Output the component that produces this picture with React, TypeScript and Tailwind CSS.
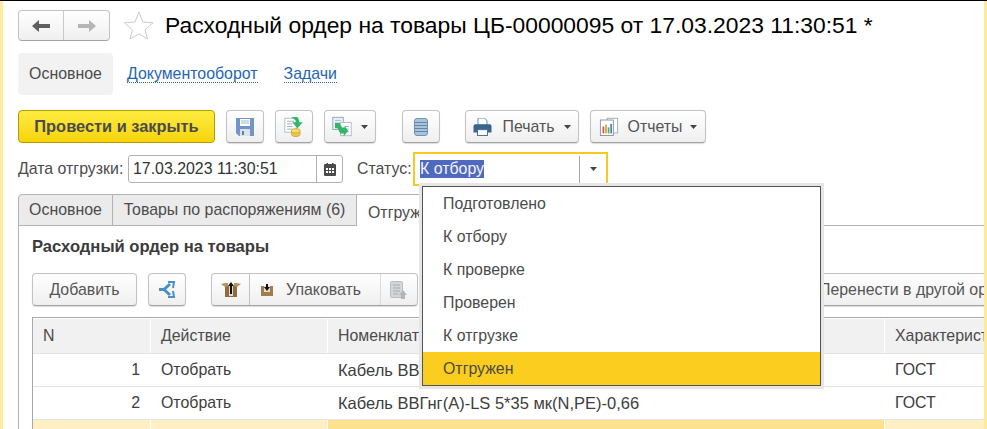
import React from "react";

const btn =
  "flex shrink-0 items-center justify-center h-[33px] rounded-[4px] border border-[#c2c2c2] border-b-[#a3a3a3] bg-linear-to-b from-white to-[#efefef] text-[#555555] shadow-[0_1px_1px_#dcdcdc]";

const Caret = ({ className = "" }: { className?: string }) => (
  <svg width="7" height="4" viewBox="0 0 7 4" className={className}>
    <path d="M0 0h7L3.500 4z" fill="#444" />
  </svg>
);

const Floppy = () => (
  <svg width="18" height="18" viewBox="0 0 18 18">
    <path d="M0 0h18v18H3l-3-3z" fill="#6f96c6" />
    <rect x="4" y="1" width="10" height="7" fill="#fff" />
    <path d="M5 3h8M5 5h8" stroke="#9ab4d4" />
    <rect x="4" y="11" width="10" height="7" fill="#dbe4ee" />
    <rect x="6" y="13" width="2" height="4" fill="#5f84b2" />
  </svg>
);

const PostIcon = () => (
  <svg width="20" height="21" viewBox="0 0 22 24">
    <rect x="0.500" y="2.500" width="13" height="16" fill="#fff" stroke="#a9b8c8" />
    <path d="M3 6h8M3 9h6M3 12h6M3 15h6" stroke="#93a8bd" />
    <ellipse cx="13" cy="20" rx="5" ry="3.500" fill="#ecc94b" stroke="#c9a227" />
    <ellipse cx="13" cy="17" rx="5" ry="2.500" fill="#f6dc72" stroke="#c9a227" />
    <path d="M8 1h7l2 4v2h4l-6 7-6-7h4V5z" fill="#33b56a" />
  </svg>
);

const MoveIcon = () => (
  <svg width="20" height="21" viewBox="0 0 22 24">
    <rect x="0.500" y="1.500" width="12" height="14" fill="#eef2f6" stroke="#8ea1b5" />
    <path d="M3 5h7M3 8h7" stroke="#a0b0c0" />
    <rect x="9.500" y="7.500" width="12" height="15" fill="#fff" stroke="#a9b8c8" />
    <path d="M14 12h5M14 15h5M15 18h4" stroke="#a0b0c0" />
    <path d="M3 8h5l3 5h3v-2l4 6-5 6v-3h-4l-3-6H3z" fill="#33b56a" />
  </svg>
);

const Stack = () => (
  <svg width="14" height="18" viewBox="0 0 14 18">
    <rect x="0.500" y="0.500" width="13" height="17" rx="2.500" fill="#a9c3db" stroke="#6e93b5" />
    <path d="M1 4.500h12M1 7.500h12M1 10.500h12M1 13.500h12" stroke="#5f87ac" strokeWidth="1.200" />
  </svg>
);

const Printer = () => (
  <svg width="19" height="18" viewBox="0 0 20 20">
    <path d="M5 0h7l3 3v5H5z" fill="#fff" stroke="#5d7f9f" />
    <path d="M2 7h16a2 2 0 0 1 2 2v7h-4v-3H4v3H0V9a2 2 0 0 1 2-2z" fill="#3a648e" />
    <rect x="4.500" y="13" width="11" height="6.500" fill="#fff" stroke="#3a648e" />
  </svg>
);

const Reports = () => (
  <svg width="20" height="19" viewBox="0 0 21 22">
    <rect x="8.500" y="1.500" width="12" height="17" fill="#fff" stroke="#9aa7b3" />
    <rect x="0.500" y="3.500" width="15" height="18" fill="#fff" stroke="#7e8d9b" />
    <rect x="3" y="11" width="2" height="8" fill="#d9534f" />
    <rect x="6" y="9" width="2" height="10" fill="#e0a030" />
    <rect x="9" y="12" width="2" height="7" fill="#4caf6a" />
    <rect x="12" y="8" width="2" height="11" fill="#4f80b8" />
  </svg>
);

const Share = () => (
  <svg width="18" height="17" viewBox="0 0 18 17" fill="none">
    <path d="M1 8.500h5L12 3" stroke="#4a8fc7" strokeWidth="3" />
    <path d="M6 8.500L12 14" stroke="#4a8fc7" strokeWidth="3" />
    <path d="M10 1l6 0-1 6M10 16l6 0-1-6" stroke="#4a8fc7" strokeWidth="2" />
  </svg>
);

const Unbox = () => (
  <svg width="20" height="15" viewBox="0 0 20 15">
    <path d="M4 4h12v11H4z" fill="#8f6c40" />
    <path d="M4 5L0 2l4-1h3v3zM16 5l4-3-4-1h-3v3z" fill="#b8925f" />
    <rect x="8" y="4" width="4" height="10" fill="#e8dcc8" />
    <path d="M10 0l3 4h-2v8H9V4H7z" fill="#111" />
  </svg>
);

const Pack = () => (
  <svg width="12" height="12" viewBox="0 0 12 12">
    <rect x="0" y="2" width="12" height="10" fill="#a07c50" />
    <rect x="3" y="2" width="6" height="6" fill="#e8dcc8" />
    <path d="M5 0h2v3h2L6 7 3 3h2z" fill="#111" />
  </svg>
);

const DocUp = () => (
  <svg width="18" height="18" viewBox="0 0 18 18">
    <rect x="0.500" y="0.500" width="12" height="16" rx="1" fill="#d3d6d8" stroke="#b9bdc0" />
    <path d="M3 4h7M3 7h7M3 10h7M3 13h5" stroke="#a9adb0" />
    <path d="M13 9l4 5h-2v4h-4v-4H9z" fill="#b3b6b8" />
  </svg>
);

const Calendar = () => (
  <svg width="12" height="13" viewBox="0 0 12 13">
    <path d="M1 1h10a1 1 0 0 1 1 1v10a1 1 0 0 1-1 1H1a1 1 0 0 1-1-1V2a1 1 0 0 1 1-1z" fill="#4a4a4a" />
    <rect x="2.500" y="0" width="1.500" height="2.500" fill="#4a4a4a" />
    <rect x="8" y="0" width="1.500" height="2.500" fill="#4a4a4a" />
    <path d="M2 5h2v2H2zM5 5h2v2H5zM8 5h2v2H8zM2 8h2v2H2zM5 8h2v2H5zM8 8h2v2H8z" fill="#fff" />
  </svg>
);

const Nav = ({ dir, color }: { dir: "l" | "r"; color: string }) => (
  <svg width="18" height="14" viewBox="0 0 18 14">
    {dir === "l" ? (
      <path d="M0 7l7-6v4h11v4H7v4z" fill={color} />
    ) : (
      <path d="M18 7l-7-6v4H0v4h11v4z" fill={color} />
    )}
  </svg>
);

const rows = [
  ["1", "Отобрать", "Кабель ВВГнг(А)-LS 5*35 мк(N,PE)-0,66", "ГОСТ"],
  ["2", "Отобрать", "Кабель ВВГнг(А)-LS 5*35 мк(N,PE)-0,66", "ГОСТ"],
];

const items = ["Подготовлено", "К отбору", "К проверке", "Проверен", "К отгрузке", "Отгружен"];

export default function App() {
  return (
    <div className="relative flex h-[429px] w-[987px] flex-col overflow-hidden bg-white font-['Liberation_Sans',Arial,sans-serif] text-[15.900px] text-[#4b4b4b]">
      <div className="h-px bg-black" />
      <div className="flex min-h-0 flex-1">
        <div className="w-[3px] bg-[#fdeb9c]" />
        <div className="flex min-w-0 flex-1 flex-col overflow-hidden pl-[15px]">
          <div className="mt-[9px] flex h-[31px] items-center">
            <div className="flex h-[31px] w-[92px] rounded-[4px] border border-[#c2c2c2] border-b-[#a3a3a3] bg-linear-to-b from-white to-[#efefef]">
              <div className="flex w-[45px] items-center justify-center border-r border-[#c9c9c9]">
                <Nav dir="l" color="#5f5f5f" />
              </div>
              <div className="flex flex-1 items-center justify-center">
                <Nav dir="r" color="#b5b5b5" />
              </div>
            </div>
            <svg width="30" height="29" viewBox="0 0 30 29" className="ml-[14px]">
              <path d="M15 1l4 10 10 .8-8 7 2.500 9.200L15 23 6 28l2.500-9.200-8-7L11 11z" fill="#fff" stroke="#c8ccd0" />
            </svg>
            <div className="ml-[11px] whitespace-nowrap text-[22.850px] leading-none text-black">
              Расходный ордер на товары ЦБ-00000095 от 17.03.2023 11:30:51 *
            </div>
          </div>

          <div className="mt-[12px] flex h-[42px] items-center">
            <div className="flex h-[42px] w-[95px] items-center justify-center rounded-[4px] bg-[#f2f2f2]">Основное</div>
            <a className="ml-[14px] border-b border-dotted border-[#2a6bb8] leading-[17px] text-[#1f66b5]">Документооборот</a>
            <a className="ml-[26px] border-b border-dotted border-[#2a6bb8] leading-[17px] text-[#1f66b5]">Задачи</a>
          </div>

          <div className="mt-[15px] flex h-[33px] items-center">
            <div className="flex h-[33px] w-[197px] items-center justify-center rounded-[4px] border border-[#b39b00] bg-linear-to-b from-[#ffec3d] to-[#f5d400] text-[16.400px] font-bold text-[#4b4b4b]">
              Провести и закрыть
            </div>
            <div className={btn + " ml-[11px] w-[38px]"}><Floppy /></div>
            <div className={btn + " ml-[11px] w-[38px]"}><PostIcon /></div>
            <div className={btn + " ml-[11px] w-[52px] gap-[9px]"}><MoveIcon /><Caret /></div>
            <div className={btn + " ml-[26px] w-[38px]"}><Stack /></div>
            <div className={btn + " ml-[25px] w-[114px]"}>
              <Printer /><span className="ml-[10px]">Печать</span><Caret className="ml-[9px]" />
            </div>
            <div className={btn + " ml-[11px] w-[116px]"}>
              <Reports /><span className="ml-[9px]">Отчеты</span><Caret className="ml-[8px]" />
            </div>
          </div>

          <div className="mt-[9px] flex h-[34px] items-center">
            <span className="w-[110px] whitespace-nowrap">Дата отгрузки:</span>
            <div className="flex h-[28px] w-[215px] items-center rounded-[3px] border border-[#b0b0b0] text-[#333]">
              <span className="flex-1 pl-[4px]">17.03.2023 11:30:51</span>
              <div className="flex h-full w-[26px] items-center justify-center border-l border-[#b0b0b0]"><Calendar /></div>
            </div>
            <span className="ml-[14px] w-[56px] whitespace-nowrap">Статус:</span>
            <div className="flex h-[34px] w-[195px] items-center border-2 border-[#fac81e] pl-[5px]">
              <span className="bg-[#4f69c0] leading-[18px] text-[#f4f4f4]">К отбору</span>
              <div className="ml-auto flex h-[27px] w-[27px] items-center justify-center border-l border-[#a8a8a8]"><Caret /></div>
            </div>
          </div>

          <div className="relative z-10 mt-[8px] -mb-px flex h-[32px]">
            <div className="flex w-[95px] items-center justify-center rounded-tl-[4px] border border-[#b3b3b3] bg-[#ebebeb]">Основное</div>
            <div className="flex w-[244px] items-center justify-center border border-l-0 border-[#b3b3b3] bg-[#ebebeb] whitespace-nowrap">Товары по распоряжениям (6)</div>
            <div className="w-[140px] border-t border-r border-[#b3b3b3] bg-white pt-[6px] pl-[11px] whitespace-nowrap">Отгружено</div>
          </div>

          <div className="flex min-h-0 flex-1 flex-col border-t border-l border-[#b3b3b3] pl-[13px]">
            <div className="mt-[12px] h-[18px] text-[16.600px] leading-[18px] font-bold whitespace-nowrap text-[#3b3b3b]">Расходный ордер на товары</div>
            <div className="mt-[17px] flex h-[33px] items-center">
              <div className={btn + " w-[105px]"}>Добавить</div>
              <div className={btn + " ml-[11px] w-[38px]"}><Share /></div>
              <div className={btn + " ml-[25px] w-[207px] justify-start"}>
                <div className="flex h-full w-[38px] items-center justify-center border-r border-[#c2c2c2]"><Unbox /></div>
                <div className="flex h-full w-[131px] items-center border-r border-[#dcdcdc] pl-[11px]">
                  <Pack /><span className="ml-[13px]">Упаковать</span>
                </div>
                <div className="flex h-full flex-1 items-center justify-center"><DocUp /></div>
              </div>
              <div className={btn + " ml-[388px] w-[250px] justify-start pl-[12px] whitespace-nowrap"}>Перенести в другой ордер</div>
            </div>

            <div className="mt-[11px] border-t border-l border-[#a8a8a8] pt-px">
              <div className="grid grid-cols-[117px_176px_556px_120px] gap-x-px">
                {["N", "Действие", "Номенклатура", "Характеристика"].map((t) => (
                  <div key={t} className="flex h-[34px] items-center overflow-hidden bg-[#f1f1f1] pl-[10px] whitespace-nowrap">{t}</div>
                ))}
              </div>
              {rows.map((r, i) => (
                <div key={i} className="grid h-[33px] grid-cols-[117px_176px_556px_120px] items-center gap-x-px border-t border-[#e4e4e4] text-[#3d3d3d]">
                  <div className="pr-[10px] text-right">{r[0]}</div>
                  <div className="pl-[10px]">{r[1]}</div>
                  <div className="pl-[10px] text-[16.500px] whitespace-nowrap">{r[2]}</div>
                  <div className="pl-[10px]">{r[3]}</div>
                </div>
              ))}
              <div className="grid h-[33px] grid-cols-[117px_176px_556px_120px] gap-x-px border-t border-[#e4e4e4]">
                <div className="bg-[#fef0c2]" />
                <div className="bg-[#fef0c2]" />
                <div className="bg-[#fde18e]" />
                <div className="bg-[#fef0c2]" />
              </div>
            </div>
          </div>
        </div>
        <div className="w-[3px] bg-[#fdeb9c]" />
      </div>

      <div className="absolute top-[186px] left-[422px] z-20 w-[399px] border border-[#555] bg-white text-[#4b4b4b] shadow-[0_0_0_3px_#e6e6e6]">
        {items.map((t, i) => (
          <div key={t} className={"flex h-[33px] items-center pl-[20px] " + (i === 5 ? "bg-[#fbcd1f]" : "")}>{t}</div>
        ))}
      </div>
    </div>
  );
}
